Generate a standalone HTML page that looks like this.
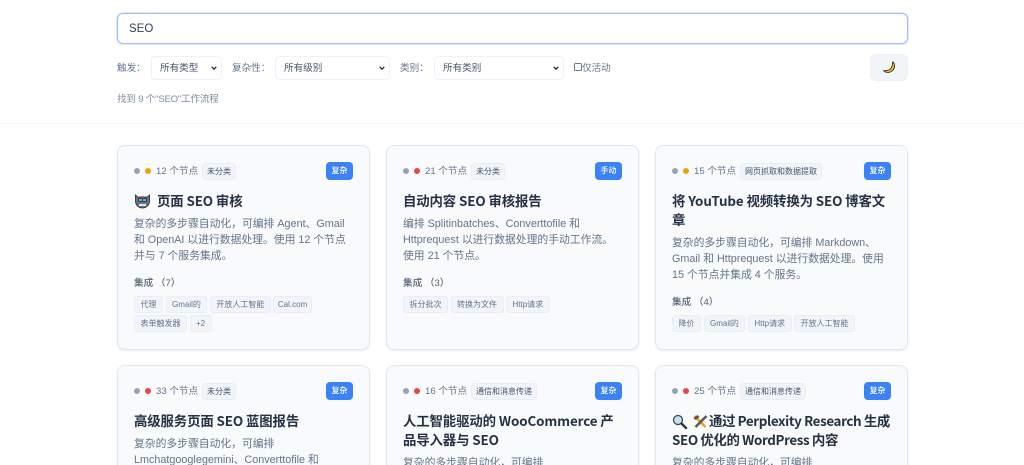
<!DOCTYPE html>
<html lang="zh"><head><meta charset="utf-8"><title>SEO</title>
<style>
*{box-sizing:border-box}
html,body{margin:0;padding:0;width:1024px;height:465px;overflow:hidden;background:#fff}
body{position:relative;font-family:"Liberation Sans","Noto Sans CJK SC",sans-serif;color:#64748b}
.a{position:absolute;white-space:nowrap}
.search{left:117px;top:13px;width:791px;height:31px;border:1px solid #9dbdf9;border-radius:6px;box-shadow:0 0 0 1px #e0eafd;background:#fff;font:11.5px/31px "Liberation Sans",sans-serif;color:#334155;padding-left:11px}
.lb{font-size:9.6px;line-height:14px;color:#64748b;top:62px}
.sel{top:56px;height:24px;border:1px solid #eef1f5;border-radius:4px;background:#fff;font-size:9.6px;line-height:24px;padding-left:8px;color:#475569}
.sel svg{position:absolute;right:4px;top:8px}
.cb{left:574px;top:63px;width:8px;height:8px;border:1px solid #777;border-radius:1.5px;background:#fff}
.btn{left:870px;top:54px;width:38px;height:27px;background:#f1f5f9;border:1px solid #eef2f7;border-radius:6px}
.hr{left:0;top:123px;width:1024px;height:1px;background:#f1f5f9}
.card{position:absolute;width:253px;height:205px;background:#f8fafc;border:1px solid #e2e8f0;border-radius:8px;box-shadow:0 1px 2px rgba(15,23,42,.08)}
.low{height:100px;border-bottom:0;border-radius:8px 8px 0 0;overflow:hidden}
.d{position:absolute;top:22px;width:6px;height:6px;border-radius:50%}
.g{left:16px;background:#94a3b8}.o{left:27px;background:#f59e0b}.r{left:27px;background:#ef4444}
.n{position:absolute;left:38px;top:19px;font-size:9.6px;line-height:14px;color:#64748b;white-space:nowrap}
.cat{position:absolute;left:84px;top:17px;height:17px;padding:0 4px;font-size:8px;line-height:16px;background:#f1f5f9;border:1px solid #e9eef4;border-radius:4px;color:#475569;white-space:nowrap}
.bd{position:absolute;right:16px;top:16px;width:27px;height:18px;background:#3b82f6;border-radius:4px;color:#fff;font-size:8px;font-weight:500;line-height:18px;text-align:center}
.t{position:absolute;left:16px;top:45px;width:235px;font-family:"Noto Sans CJK SC","Liberation Sans",sans-serif;font-size:13.4px;line-height:19px;font-weight:700;letter-spacing:-.12px;color:#263244;margin:0;white-space:nowrap}
.p{position:absolute;left:16px;width:230px;font-size:10.8px;line-height:16px;color:#64748b;margin:0;white-space:nowrap}
.h{position:absolute;left:16px;font-size:9.6px;line-height:14px;font-weight:500;color:#556376;white-space:nowrap}
.tags{position:absolute;left:16px;width:225px;display:flex;flex-wrap:wrap;gap:2.5px 2.5px}
.tags span{height:17px;padding:0 5.5px;font-size:8px;line-height:15px;color:#64748b;background:#f1f5f9;border:1px solid #e9eef4;border-radius:3px;white-space:nowrap}
.ic{display:inline-block;vertical-align:-3px}
</style></head><body>
<div class="a search">SEO</div>
<div class="a lb" style="left:117px">触发：</div>
<div class="a sel" style="left:151px;width:71px">所有类型<svg width="6" height="6" viewBox="0 0 6 6"><path d="M.7 1.8 3 4.2l2.3-2.4" fill="none" stroke="#222" stroke-width="1.2"/></svg></div>
<div class="a lb" style="left:232px">复杂性：</div>
<div class="a sel" style="left:275px;width:115px">所有级别<svg width="6" height="6" viewBox="0 0 6 6"><path d="M.7 1.8 3 4.2l2.3-2.4" fill="none" stroke="#222" stroke-width="1.2"/></svg></div>
<div class="a lb" style="left:400px">类别：</div>
<div class="a sel" style="left:434px;width:130px">所有类别<svg width="6" height="6" viewBox="0 0 6 6"><path d="M.7 1.8 3 4.2l2.3-2.4" fill="none" stroke="#222" stroke-width="1.2"/></svg></div>
<div class="a cb"></div>
<div class="a lb" style="left:582px">仅活动</div>
<div class="a btn"><svg style="position:absolute;left:11px;top:6px" width="15" height="14" viewBox="0 0 15 14"><path d="M10.500 1.200 11.400 1c1.600 3.200 1.300 6.300-.6 8.300-2 2-5 2.600-7.800 1.500L1.600 9.600c2.600.3 5.200-.2 6.800-1.700 1.500-1.500 2.200-3.800 2.100-6.700z" fill="#fbbf24" stroke="#3a3220" stroke-width=".9" stroke-linejoin="round"/></svg></div>
<div class="a" style="left:117px;top:93px;font-size:9.6px;line-height:14px;letter-spacing:-.22px;color:#808c9c">找到 9 个"SEO"工作流程</div>
<div class="a hr"></div>

<div class="card" style="left:117px;top:145px"><i class="d g"></i><i class="d o"></i><span class="n">12 个节点</span><span class="cat">未分类</span><span class="bd">复杂</span>
<h3 class="t"><svg class="ic" width="17" height="15" viewBox="0 0 17 15" style="margin-right:6px"><path d="M1.500 1 3.500 3h10l2-2v6c0 4-3 7-7 7S1.500 11 1.500 7z" fill="#6b7280" stroke="#222" stroke-width=".8"/><rect x="4" y="4" width="9" height="4" fill="#3b3f46"/><rect x="5" y="5" width="3" height="2" fill="#38bdf8"/><rect x="9" y="5" width="3" height="2" fill="#38bdf8"/><rect x="7.500" y="2" width="2" height="2" fill="#ef4444"/><rect x="5" y="10" width="7" height="2" fill="#e5e7eb"/></svg>页面 SEO 审核</h3>
<p class="p" style="top:70px">复杂的多步骤自动化，可编排 Agent、Gmail<br>和 OpenAI 以进行数据处理。使用 12 个节点<br>并与 7 个服务集成。</p>
<div class="h" style="top:131px">集成 （7）</div>
<div class="tags" style="top:149.500px"><span>代理</span><span>Gmail的</span><span>开放人工智能</span><span style="padding:0 3.5px">Cal.com</span><span>表单触发器</span><span>+2</span></div></div>

<div class="card" style="left:386px;top:145px"><i class="d g"></i><i class="d r"></i><span class="n">21 个节点</span><span class="cat">未分类</span><span class="bd">手动</span>
<h3 class="t">自动内容 SEO 审核报告</h3>
<p class="p" style="top:70px">编排 Splitinbatches、Converttofile 和<br>Httprequest 以进行数据处理的手动工作流。<br>使用 21 个节点。</p>
<div class="h" style="top:131px">集成 （3）</div>
<div class="tags" style="top:149.500px"><span>拆分批次</span><span>转换为文件</span><span>Http请求</span></div></div>

<div class="card" style="left:655px;top:145px"><i class="d g"></i><i class="d o"></i><span class="n">15 个节点</span><span class="cat">网页抓取和数据提取</span><span class="bd">复杂</span>
<h3 class="t">将 YouTube 视频转换为 SEO 博客文<br>章</h3>
<p class="p" style="top:89px">复杂的多步骤自动化，可编排 Markdown、<br>Gmail 和 Httprequest 以进行数据处理。使用<br>15 个节点并集成 4 个服务。</p>
<div class="h" style="top:150px">集成 （4）</div>
<div class="tags" style="top:168.500px"><span>降价</span><span>Gmail的</span><span>Http请求</span><span>开放人工智能</span></div></div>

<div class="card low" style="left:117px;top:365px"><i class="d g"></i><i class="d r"></i><span class="n">33 个节点</span><span class="cat">未分类</span><span class="bd">复杂</span>
<h3 class="t">高级服务页面 SEO 蓝图报告</h3>
<p class="p" style="top:70px">复杂的多步骤自动化，可编排<br>Lmchatgooglegemini、Converttofile 和</p></div>

<div class="card low" style="left:386px;top:365px"><i class="d g"></i><i class="d r"></i><span class="n">16 个节点</span><span class="cat">通信和消息传递</span><span class="bd">复杂</span>
<h3 class="t">人工智能驱动的 WooCommerce 产<br>品导入器与 SEO</h3>
<p class="p" style="top:89px">复杂的多步骤自动化，可编排</p></div>

<div class="card low" style="left:655px;top:365px"><i class="d g"></i><i class="d r"></i><span class="n">25 个节点</span><span class="cat">通信和消息传递</span><span class="bd">复杂</span>
<h3 class="t" style="letter-spacing:-.38px"><svg class="ic" width="16" height="15" viewBox="0 0 16 15" style="margin-right:4px"><circle cx="6" cy="6" r="4.500" fill="#bfe3f5" stroke="#444" stroke-width="1.300"/><path d="m9.500 9.500 4.500 4.500" stroke="#333" stroke-width="2.400" stroke-linecap="round"/></svg><svg class="ic" width="17" height="15" viewBox="0 0 16 15"><path d="M2 2l11 11" stroke="#f59e0b" stroke-width="2.400"/><path d="M14 2 3 13" stroke="#555" stroke-width="2.400"/><path d="M1 4l4-3 2 2-4 3z" fill="#555"/></svg>通过 Perplexity Research 生成<br>SEO 优化的 WordPress 内容</h3>
<p class="p" style="top:89px">复杂的多步骤自动化，可编排</p></div>
</body></html>
